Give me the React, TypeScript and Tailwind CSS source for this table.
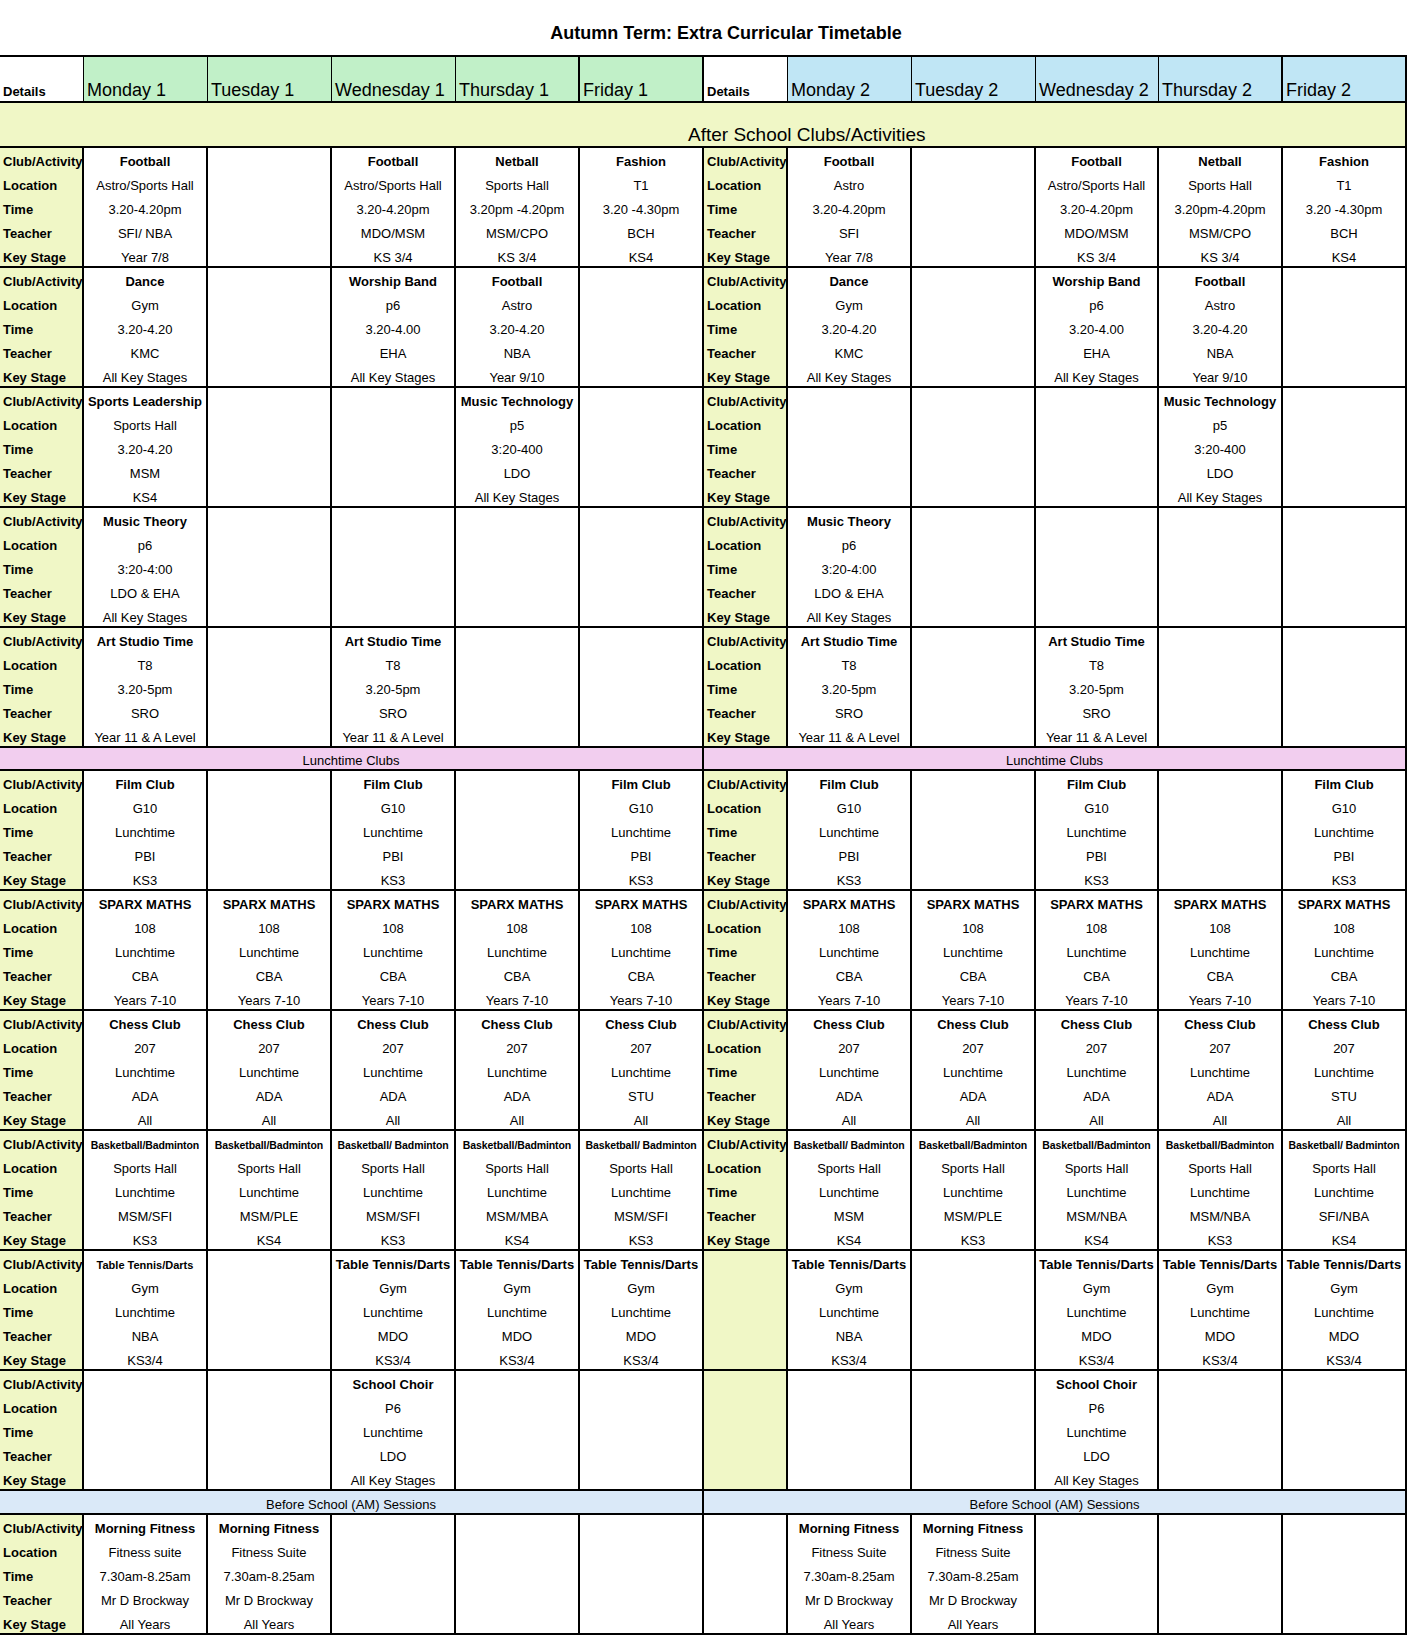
import React from "react";

type Entry = {
  name: string;
  loc: string;
  time: string;
  teacher: string;
  ks: string;
  small?: "bb" | "tt";
} | null;

type Side = "labels" | "green" | "white";

type Row = {
  leftSide: Side;
  left: Entry[];
  rightSide: Side;
  right: Entry[];
};

const COLS =
  "grid grid-cols-[84px_124px_124px_124px_124px_124px_84px_124px_124px_123px_124px_124px]";

const YELLOW = "bg-[#F0F7C6]";

const e = (
  name: string,
  loc: string,
  time: string,
  teacher: string,
  ks: string,
  small?: "bb" | "tt"
): Entry => ({ name, loc, time, teacher, ks, small });

const football1 = e("Football", "Astro/Sports Hall", "3.20-4.20pm", "SFI/ NBA", "Year 7/8");
const footballW = e("Football", "Astro/Sports Hall", "3.20-4.20pm", "MDO/MSM", "KS 3/4");
const dance = e("Dance", "Gym", "3.20-4.20", "KMC", "All Key Stages");
const worship = e("Worship Band", "p6", "3.20-4.00", "EHA", "All Key Stages");
const footballTh = e("Football", "Astro", "3.20-4.20", "NBA", "Year 9/10");
const musicTech = e("Music Technology", "p5", "3:20-400", "LDO", "All Key Stages");
const musicTheory = e("Music Theory", "p6", "3:20-4:00", "LDO & EHA", "All Key Stages");
const art = e("Art Studio Time", "T8", "3.20-5pm", "SRO", "Year 11 & A Level");
const film = e("Film Club", "G10", "Lunchtime", "PBI", "KS3");
const sparx = e("SPARX MATHS", "108", "Lunchtime", "CBA", "Years 7-10");
const chess = e("Chess Club", "207", "Lunchtime", "ADA", "All");
const chessS = e("Chess Club", "207", "Lunchtime", "STU", "All");
const bb = (name: string, t: string, ks: string) => e(name, "Sports Hall", "Lunchtime", t, ks, "bb");
const tt = (t: string, small?: "tt") => e("Table Tennis/Darts", "Gym", "Lunchtime", t, "KS3/4", small);
const choir = e("School Choir", "P6", "Lunchtime", "LDO", "All Key Stages");

const afterRows: Row[] = [
  {
    leftSide: "labels",
    left: [
      football1,
      null,
      footballW,
      e("Netball", "Sports Hall", "3.20pm -4.20pm", "MSM/CPO", "KS 3/4"),
      e("Fashion", "T1", "3.20 -4.30pm", "BCH", "KS4"),
    ],
    rightSide: "labels",
    right: [
      e("Football", "Astro", "3.20-4.20pm", "SFI", "Year 7/8"),
      null,
      footballW,
      e("Netball", "Sports Hall", "3.20pm-4.20pm", "MSM/CPO", "KS 3/4"),
      e("Fashion", "T1", "3.20 -4.30pm", "BCH", "KS4"),
    ],
  },
  {
    leftSide: "labels",
    left: [dance, null, worship, footballTh, null],
    rightSide: "labels",
    right: [dance, null, worship, footballTh, null],
  },
  {
    leftSide: "labels",
    left: [e("Sports Leadership", "Sports Hall", "3.20-4.20", "MSM", "KS4"), null, null, musicTech, null],
    rightSide: "labels",
    right: [null, null, null, musicTech, null],
  },
  {
    leftSide: "labels",
    left: [musicTheory, null, null, null, null],
    rightSide: "labels",
    right: [musicTheory, null, null, null, null],
  },
  {
    leftSide: "labels",
    left: [art, null, art, null, null],
    rightSide: "labels",
    right: [art, null, art, null, null],
  },
];

const lunchRows: Row[] = [
  {
    leftSide: "labels",
    left: [film, null, film, null, film],
    rightSide: "labels",
    right: [film, null, film, null, film],
  },
  {
    leftSide: "labels",
    left: [sparx, sparx, sparx, sparx, sparx],
    rightSide: "labels",
    right: [sparx, sparx, sparx, sparx, sparx],
  },
  {
    leftSide: "labels",
    left: [chess, chess, chess, chess, chessS],
    rightSide: "labels",
    right: [chess, chess, chess, chess, chessS],
  },
  {
    leftSide: "labels",
    left: [
      bb("Basketball/Badminton", "MSM/SFI", "KS3"),
      bb("Basketball/Badminton", "MSM/PLE", "KS4"),
      bb("Basketball/ Badminton", "MSM/SFI", "KS3"),
      bb("Basketball/Badminton", "MSM/MBA", "KS4"),
      bb("Basketball/ Badminton", "MSM/SFI", "KS3"),
    ],
    rightSide: "labels",
    right: [
      bb("Basketball/ Badminton", "MSM", "KS4"),
      bb("Basketball/Badminton", "MSM/PLE", "KS3"),
      bb("Basketball/Badminton", "MSM/NBA", "KS4"),
      bb("Basketball/Badminton", "MSM/NBA", "KS3"),
      bb("Basketball/ Badminton", "SFI/NBA", "KS4"),
    ],
  },
  {
    leftSide: "labels",
    left: [tt("NBA", "tt"), null, tt("MDO"), tt("MDO"), tt("MDO")],
    rightSide: "green",
    right: [tt("NBA"), null, tt("MDO"), tt("MDO"), tt("MDO")],
  },
  {
    leftSide: "labels",
    left: [null, null, choir, null, null],
    rightSide: "green",
    right: [null, null, choir, null, null],
  },
];

const morningRows: Row[] = [
  {
    leftSide: "labels",
    left: [
      e("Morning Fitness", "Fitness suite", "7.30am-8.25am", "Mr D Brockway", "All Years"),
      e("Morning Fitness", "Fitness Suite", "7.30am-8.25am", "Mr D Brockway", "All Years"),
      null,
      null,
      null,
    ],
    rightSide: "white",
    right: [
      e("Morning Fitness", "Fitness Suite", "7.30am-8.25am", "Mr D Brockway", "All Years"),
      e("Morning Fitness", "Fitness Suite", "7.30am-8.25am", "Mr D Brockway", "All Years"),
      null,
      null,
      null,
    ],
  },
];

function LabelCell({ side }: { side: Side }) {
  if (side === "white") {
    return <div className="h-[118px] border-r-2 border-black bg-white" />;
  }
  if (side === "green") {
    return <div className={`h-[118px] border-r-2 border-black ${YELLOW}`} />;
  }
  const labels = ["Club/Activity", "Location", "Time", "Teacher", "Key Stage"];
  return (
    <div className={`h-[118px] border-r-2 border-black ${YELLOW} overflow-hidden pt-[2px] pl-[3px]`}>
      {labels.map((l) => (
        <div key={l} className="h-6 leading-6 text-[13px] font-bold text-black whitespace-nowrap">
          {l}
        </div>
      ))}
    </div>
  );
}

function EntryCell({ entry }: { entry: Entry }) {
  let nameCls = "text-[13px]";
  if (entry && entry.small === "bb") nameCls = "text-[10.5px] tracking-[-0.1px]";
  if (entry && entry.small === "tt") nameCls = "text-[11px]";
  return (
    <div className="h-[118px] border-r-2 border-black bg-white overflow-hidden pt-[2px] text-center text-black">
      {entry && (
        <>
          <div className={`h-6 leading-6 font-bold whitespace-nowrap ${nameCls}`}>{entry.name}</div>
          <div className="h-6 leading-6 text-[13px] whitespace-nowrap">{entry.loc}</div>
          <div className="h-6 leading-6 text-[13px] whitespace-nowrap">{entry.time}</div>
          <div className="h-6 leading-6 text-[13px] whitespace-nowrap">{entry.teacher}</div>
          <div className="h-6 leading-6 text-[13px] whitespace-nowrap">{entry.ks}</div>
        </>
      )}
    </div>
  );
}

function BlockRow({ row }: { row: Row }) {
  return (
    <div className={`${COLS} border-b-2 border-black`}>
      <LabelCell side={row.leftSide} />
      {row.left.map((en, i) => (
        <EntryCell key={"l" + i} entry={en} />
      ))}
      <LabelCell side={row.rightSide} />
      {row.right.map((en, i) => (
        <EntryCell key={"r" + i} entry={en} />
      ))}
    </div>
  );
}

function SplitBand({ text, bg, h }: { text: string; bg: string; h: string }) {
  return (
    <div className={`grid grid-cols-[704px_703px] border-b-2 border-black ${bg}`}>
      {[0, 1].map((i) => (
        <div key={i} className={`${h} border-r-2 border-black flex items-end justify-center`}>
          <span className="text-[13px] leading-[16px] text-black whitespace-nowrap">{text}</span>
        </div>
      ))}
    </div>
  );
}

const headerDays = [
  { t: "Details", kind: "details", border: "border-r" },
  { t: "Monday 1", kind: "g", border: "border-r" },
  { t: "Tuesday 1", kind: "g", border: "border-r" },
  { t: "Wednesday 1", kind: "g", border: "border-r" },
  { t: "Thursday 1", kind: "g", border: "border-r-2" },
  { t: "Friday 1", kind: "g", border: "border-r-2" },
  { t: "Details", kind: "details", border: "border-r" },
  { t: "Monday 2", kind: "b", border: "border-r" },
  { t: "Tuesday 2", kind: "b", border: "border-r" },
  { t: "Wednesday 2", kind: "b", border: "border-r" },
  { t: "Thursday 2", kind: "b", border: "border-r-2" },
  { t: "Friday 2", kind: "b", border: "border-r-2" },
];

export default function App() {
  return (
    <div className="w-[1408px] bg-white font-['Liberation_Sans',Arial,sans-serif] text-black">
      {/* Title */}
      <div className="h-[55px] flex items-center justify-center pl-[44px] pt-[10px]">
        <h1 className="text-[18px] font-bold leading-[22px] whitespace-nowrap">
          Autumn Term: Extra Curricular Timetable
        </h1>
      </div>

      <div className="w-[1407px]">
        {/* Header */}
        <div className={`${COLS} border-t-2 border-b-2 border-black`}>
          {headerDays.map((d, i) => {
            const bg =
              d.kind === "g" ? "bg-[#C1F0C8]" : d.kind === "b" ? "bg-[#C0E6F5]" : "bg-white";
            return (
              <div
                key={i}
                className={`h-[44px] ${d.border} border-black ${bg} flex items-end pl-[3px] overflow-hidden`}
              >
                {d.kind === "details" ? (
                  <span className="text-[13px] font-bold leading-[19px] whitespace-nowrap">{d.t}</span>
                ) : (
                  <span className="text-[18px] leading-[21px] whitespace-nowrap">{d.t}</span>
                )}
              </div>
            );
          })}
        </div>

        {/* After school band */}
        <div className={`h-[45px] ${YELLOW} border-b-2 border-r-2 border-black flex items-end pl-[688px]`}>
          <span className="text-[19px] leading-[22px] whitespace-nowrap">After School Clubs/Activities</span>
        </div>

        {afterRows.map((r, i) => (
          <BlockRow key={"a" + i} row={r} />
        ))}

        <SplitBand text="Lunchtime Clubs" bg="bg-[#F2CEEF]" h="h-[21px]" />

        {lunchRows.map((r, i) => (
          <BlockRow key={"lu" + i} row={r} />
        ))}

        <SplitBand text="Before School (AM) Sessions" bg="bg-[#DAE9F8]" h="h-[22px]" />

        {morningRows.map((r, i) => (
          <BlockRow key={"m" + i} row={r} />
        ))}
      </div>
    </div>
  );
}
